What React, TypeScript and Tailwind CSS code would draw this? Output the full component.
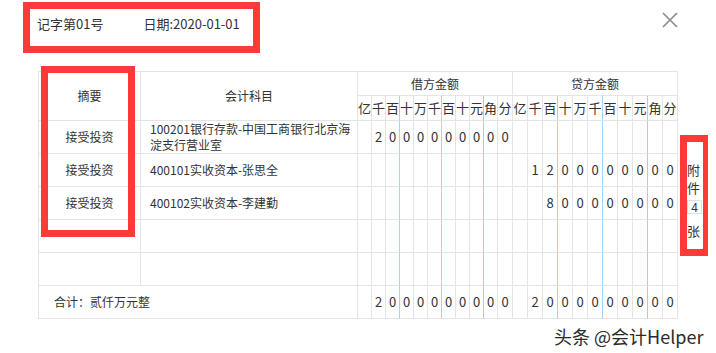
import { type FC } from 'react';

const FONT = "font-['Noto_Sans_CJK_SC','Liberation_Sans',sans-serif]";
const UNITS = ['亿', '千', '百', '十', '万', '千', '百', '十', '元', '角', '分'];

type Row = {
  summary: string;
  account: string[];
  debit: string;
  credit: string;
};

const rows: Row[] = [
  { summary: '接受投资', account: ['100201银行存款-中国工商银行北京海', '淀支行营业室'], debit: '2000000000', credit: '' },
  { summary: '接受投资', account: ['400101实收资本-张思全'], debit: '', credit: '1200000000' },
  { summary: '接受投资', account: ['400102实收资本-李建勤'], debit: '', credit: '800000000' },
  { summary: '', account: [], debit: '', credit: '' },
  { summary: '', account: [], debit: '', credit: '' },
];

// right border colour of the digit columns: blue after 百/千, red before 角
const lineClass = (i: number) => {
  if (i === 2 || i === 5) return 'border-r border-b border-r-[#a5d4f4] border-b-[#e4e4e4]';
  if (i === 8) return 'border-r border-b border-r-[#ecb4b4] border-b-[#e4e4e4]';
  return 'border-r border-b border-[#e4e4e4]';
};

const toDigits = (amount: string) => {
  const pad = UNITS.length - amount.length;
  return UNITS.map((_, i) => (i < pad ? '' : amount[i - pad]));
};

const DigitCells: FC<{ amount: string }> = ({ amount }) => (
  <>
    {toDigits(amount).map((d, i) => (
      <div key={i} className={`${lineClass(i)} flex items-center justify-center text-[13px] text-[#333]`}>
        {d}
      </div>
    ))}
  </>
);

const CloseIcon: FC = () => (
  <svg width="16" height="16" viewBox="0 0 16 16" className="text-[#8a8a8a]">
    <path d="M1 1 L15 15 M15 1 L1 15" stroke="currentColor" strokeWidth="1.6" fill="none" />
  </svg>
);

export default function App() {
  return (
    <div className={`relative w-[716px] h-[353px] bg-white overflow-hidden ${FONT} text-[#333]`}>
      {/* header */}
      <div className="flex items-center justify-between h-[48px] pl-[37px] pr-[38px]">
        <div className="flex items-center text-[13px] gap-[40px]">
          <span>记字第01号</span>
          <span>日期:2020-01-01</span>
        </div>
        <div className="-mt-[8px]">
          <CloseIcon />
        </div>
      </div>

      <div className="flex items-start mt-[23px] pl-[38px]">
        {/* voucher grid */}
        <div className="grid grid-cols-[102px_217px_14px_14px_14px_14px_14px_14px_14px_14px_14px_14px_15px_15px_15px_15px_15px_15px_15px_15px_15px_15px_15px_15px] grid-rows-[24px_25px_33px_33px_33px_33px_33px_33px] border-l border-t border-[#e4e4e4] text-[12px]">
          <div className="row-span-2 border-r border-b border-[#e4e4e4] flex items-center justify-center">摘要</div>
          <div className="row-span-2 border-r border-b border-[#e4e4e4] flex items-center justify-center">会计科目</div>
          <div className="col-span-11 border-r border-b border-[#e4e4e4] flex items-center justify-center">借方金额</div>
          <div className="col-span-11 border-r border-b border-[#e4e4e4] flex items-center justify-center">贷方金额</div>
          {[0, 1].map((g) =>
            UNITS.map((u, i) => (
              <div key={`${g}-${i}`} className={`${lineClass(i)} flex items-center justify-center text-[13px]`}>
                {u}
              </div>
            )),
          )}

          {rows.map((row, r) => (
            <div key={r} className="contents">
              <div className="border-r border-b border-[#e4e4e4] flex items-center justify-center">{row.summary}</div>
              <div className="border-r border-b border-[#e4e4e4] flex flex-col justify-center pl-[9px] leading-[16px]">
                {row.account.map((line) => (
                  <span key={line}>{line}</span>
                ))}
              </div>
              <DigitCells amount={row.debit} />
              <DigitCells amount={row.credit} />
            </div>
          ))}

          <div className="col-span-2 border-r border-b border-[#e4e4e4] flex items-center pl-[15px]">合计：贰仟万元整</div>
          <DigitCells amount="2000000000" />
          <DigitCells amount="2000000000" />
        </div>

        {/* attachments */}
        <div className="ml-[9px] mt-[90px] flex flex-col items-start text-[13px] leading-[18px]">
          <span>附</span>
          <span>件</span>
          <span className="mt-[3px] w-[15px] h-[14px] border border-[#e0e0e0] flex items-center justify-center text-[12px] leading-none">4</span>
          <span className="mt-[8px]">张</span>
        </div>
      </div>

      {/* annotation boxes */}
      <div className="absolute left-[23px] top-[2px] w-[237px] h-[51px] border-[7px] border-[#fd3a3a]" />
      <div className="absolute left-[41px] top-[66px] w-[94px] h-[171px] border-[7px] border-[#fd3a3a]" />
      <div className="absolute left-[680px] top-[135px] w-[28px] h-[121px] border-[7px] border-r-[5px] border-[#fd3a3a]" />

      {/* watermark */}
      <div className="absolute left-[554px] top-[324px] text-[18px] leading-[24px] text-[#2a2a2a] [text-shadow:0_0_2px_#fff,1px_1px_1px_#fff]">
        头条 @会计Helper
      </div>
    </div>
  );
}
